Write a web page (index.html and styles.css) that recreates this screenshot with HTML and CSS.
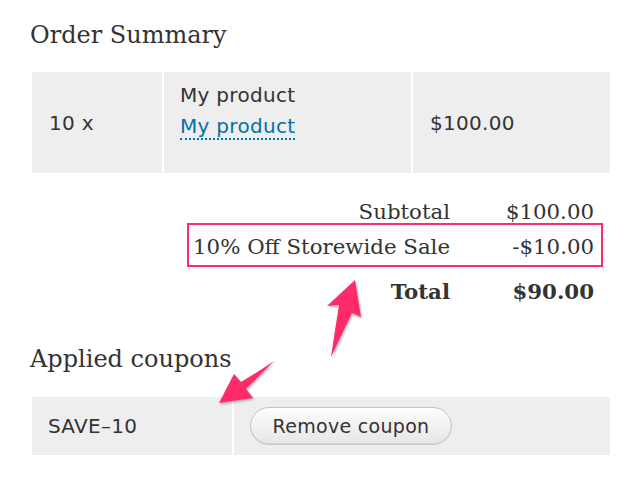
FILE: index.html
```html
<!DOCTYPE html>
<html>
<head>
<meta charset="utf-8">
<link rel="stylesheet" href="styles.css">
</head>
<body>
<div class="page">
  <h2 class="heading">Order Summary</h2>
  <table class="items">
    <tr>
      <td class="qty">10 x</td>
      <td class="prod"><div>My product</div><a class="link" href="#">My product</a></td>
      <td class="price">$100.00</td>
    </tr>
  </table>
  <div class="totals">
    <div class="trow subtotal"><span class="tlabel">Subtotal</span><span class="tamt">$100.00</span></div>
    <div class="trow discount"><span class="tlabel">10% Off Storewide Sale</span><span class="tamt">-$10.00</span></div>
    <div class="trow total"><span class="tlabel">Total</span><span class="tamt">$90.00</span></div>
  </div>
  <h2 class="heading coupons-title">Applied coupons</h2>
  <table class="coupons">
    <tr>
      <td class="code">SAVE–10</td>
      <td class="action"><button class="btn">Remove coupon</button></td>
    </tr>
  </table>
  <svg class="annot" width="630" height="496" viewBox="0 0 630 496">
    <defs>
      <filter id="sh" x="-20%" y="-20%" width="140%" height="140%">
        <feDropShadow dx="1" dy="1.5" stdDeviation="1.2" flood-color="#000" flood-opacity="0.3"/>
      </filter>
    </defs>
    <path filter="url(#sh)" fill="#fe2c6a" d="M355,280 L327,306 L339,305 Q335,330 331,357 Q342,334 352,313 L361,317 Z"/>
    <path filter="url(#sh)" fill="#fe2c6a" d="M219,403 L234,374 L241,382 Q258,372 274,361 Q260,375 246,389 L253,398 Z"/>
  </svg>
</div>
</body>
</html>
```
FILE: styles.css
```css
* { box-sizing: border-box; }
html, body { margin: 0; padding: 0; background: #fff; }
.page {
  position: relative;
  width: 630px;
  height: 496px;
  padding: 18px 20px 0 32px;
  color: #333;
  overflow: hidden;
}
.heading {
  font-family: "DejaVu Serif", Georgia, serif;
  font-weight: normal;
  font-size: 24px;
  line-height: 34px;
  margin: 0 0 20px -2px;
  color: #333;
}
table {
  border-collapse: collapse;
  width: 578px;
  font-family: "DejaVu Sans", "Lucida Grande", sans-serif;
  font-size: 20px;
  letter-spacing: 0.3px;
  color: #333;
}
td {
  background: #eeeeee;
  border-left: 2px solid #fff;
  padding: 0 0 0 17px;
  vertical-align: middle;
}
td:first-child { border-left: 0; }
.items td { height: 101px; }
.qty { width: 131px; }
.prod {
  width: 249px;
  padding-left: 16px;
  padding-top: 8px;
  line-height: 31px;
  vertical-align: top;
}
.link {
  color: #0073aa;
  text-decoration: none;
  border-bottom: 2px dotted #0073aa;
}
.totals {
  font-family: "DejaVu Serif", Georgia, serif;
  font-size: 21.3px;
  color: #333;
  width: 578px;
  padding: 28px 16px 0 0;
  display: flex;
  flex-direction: column;
  align-items: flex-end;
}
.trow {
  display: flex;
  justify-content: flex-end;
}
.subtotal { line-height: 22px; }
.tamt { width: 144px; text-align: right; }
.discount {
  border: 2px solid #fe2c6a;
  padding: 4px 7px 0 4px;
  margin-right: -9px;
  line-height: 36px;
}
.total { font-weight: bold; line-height: 50px; }
.coupons-title { margin-top: 25px; margin-bottom: 21px; }
.coupons td { height: 58px; }
.code { width: 201px; padding-left: 16px; }
.action { padding-left: 16px; }
.btn {
  font-family: "DejaVu Sans", "Lucida Grande", sans-serif;
  font-size: 19px;
  letter-spacing: 0.3px;
  color: #333;
  height: 38px;
  width: 202px;
  border: 1px solid #c4c4c4;
  border-radius: 19px;
  background: linear-gradient(#fdfdfd, #e6e6e6);
  box-shadow: inset 0 -1px 1px rgba(0,0,0,0.08);
  padding: 0;
}
.annot { position: absolute; left: 0; top: 0; pointer-events: none; }
```
